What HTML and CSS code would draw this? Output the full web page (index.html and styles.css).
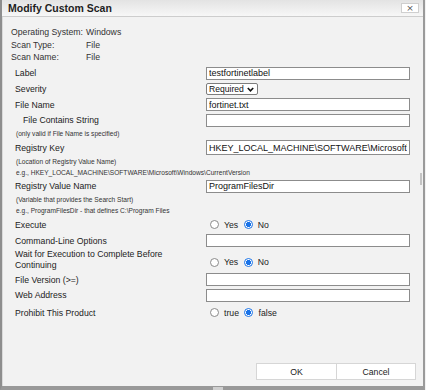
FILE: index.html
```html
<!DOCTYPE html>
<html lang="en">
<head>
<meta charset="utf-8">
<title>Modify Custom Scan</title>
<link rel="stylesheet" href="styles.css">
</head>
<body>
<div class="dialog">
  <div class="titlebar">
    <span class="title">Modify Custom Scan</span>
    <button class="close" type="button" aria-label="Close">×</button>
  </div>
  <div class="content">
    <div class="info">
      <span>Operating System:</span><span>Windows</span>
      <span>Scan Type:</span><span>File</span>
      <span>Scan Name:</span><span>File</span>
    </div>
    <div class="form">
      <div class="row h16"><label class="lbl">Label</label><input class="field" type="text" value="testfortinetlabel"></div>
      <div class="row h16"><label class="lbl">Severity</label>
        <div class="select"><span>Required</span><svg class="chev" width="7" height="5" viewBox="0 0 7 5"><path d="M0.8 1 L3.5 3.8 L6.2 1" fill="none" stroke="#111" stroke-width="1.6"/></svg></div>
      </div>
      <div class="row h15"><label class="lbl">File Name</label><input class="field" type="text" value="fortinet.txt"></div>
      <div class="row h16"><label class="lbl sub">File Contains String</label><input class="field" type="text" value=""></div>
      <div class="note">(only valid if File Name is specified)</div>
      <div class="row h17"><label class="lbl">Registry Key</label><input class="field tall" type="text" value="HKEY_LOCAL_MACHINE\SOFTWARE\Microsoft\Windows\CurrentVersion"></div>
      <div class="note">(Location of Registry Value Name)</div>
      <div class="note">e.g., HKEY_LOCAL_MACHINE\SOFTWARE\Microsoft\Windows\CurrentVersion</div>
      <div class="row h16"><label class="lbl">Registry Value Name</label><input class="field" type="text" value="ProgramFilesDir"></div>
      <div class="note">(Variable that provides the Search Start)</div>
      <div class="note">e.g., ProgramFilesDir - that defines C:\Program Files</div>
      <div class="row h17"><span class="lbl">Execute</span>
        <div class="radios"><label class="opt"><input type="radio" name="exec">Yes</label><label class="opt"><input type="radio" name="exec" checked>No</label></div>
      </div>
      <div class="row h15"><label class="lbl">Command-Line Options</label><input class="field" type="text" value=""></div>
      <div class="row h24"><span class="lbl two">Wait for Execution to Complete Before Continuing</span>
        <div class="radios low"><label class="opt"><input type="radio" name="wait">Yes</label><label class="opt"><input type="radio" name="wait" checked>No</label></div>
      </div>
      <div class="row h15"><label class="lbl">File Version (&gt;=)</label><input class="field" type="text" value=""></div>
      <div class="row h16"><label class="lbl">Web Address</label><input class="field" type="text" value=""></div>
      <div class="row h19"><span class="lbl">Prohibit This Product</span>
        <div class="radios"><label class="opt"><input type="radio" name="prohibit">true</label><label class="opt"><input type="radio" name="prohibit" checked>false</label></div>
      </div>
    </div>
    <div class="scroll-thumb"></div>
  </div>
  <div class="footer">
    <button class="btn" type="button">OK</button>
    <button class="btn" type="button">Cancel</button>
  </div>
  <div class="grip"></div>
</div>
</body>
</html>
```

FILE: styles.css
```css
* { box-sizing: border-box; }
html, body { margin: 0; padding: 0; }
body {
  width: 426px;
  height: 390px;
  background: #f2f2f2;
  font-family: "Liberation Sans", Arial, sans-serif;
  color: #222;
  overflow: hidden;
}
.dialog {
  position: relative;
  width: 425px;
  height: 390px;
  display: flex;
  flex-direction: column;
  background: #f2f2f2;
  border-left: 2px solid #8e8e8e;
  border-right: 2px solid #9a9a9a;
  border-bottom: 4px solid #999;
  box-shadow: inset 1px 0 0 #dadada;
}
.titlebar {
  height: 17px;
  flex: none;
  display: flex;
  align-items: center;
  justify-content: space-between;
  padding: 0 4px 0 6px;
  background: linear-gradient(#e3e3e3, #f7f7f7);
  border-bottom: 1px solid #cdcdcd;
}
.title {
  font-weight: bold;
  font-size: 10.5px;
  color: #1e1e1e;
  line-height: 16px;
}
.close {
  width: 18px;
  height: 10px;
  margin: 0;
  padding: 0;
  border: 1px solid #cfcfcf;
  background: #fff;
  color: #555;
  font-family: "DejaVu Sans", sans-serif;
  font-size: 9px;
  line-height: 8px;
  display: flex;
  align-items: center;
  justify-content: center;
}
.content {
  position: relative;
  flex: 1;
  padding: 9px 0 0 9px;
}
.info {
  display: grid;
  grid-template-columns: 75px auto;
  font-size: 8.7px;
  line-height: 12.5px;
  color: #333;
}
.form {
  margin-top: 1.5px;
  padding-left: 4px;
  font-size: 8.7px;
}
.row {
  display: flex;
  align-items: center;
}
.h15 { height: 15px; }
.h16 { height: 16px; }
.h17 { height: 17px; }
.h19 { height: 19px; }
.h24 { height: 24px; }
.lbl {
  width: 191px;
  flex: none;
  padding-right: 8px;
  color: #222;
}
.lbl.sub { padding-left: 8px; }
.lbl.two { line-height: 11px; }
.field {
  width: 204px;
  height: 13px;
  margin: 0;
  padding: 0 2px;
  border: 1px solid #8c8c8c;
  background: #fff;
  font-family: "Liberation Sans", Arial, sans-serif;
  font-size: 9px;
  color: #111;
  outline: none;
}
.field.tall { height: 15px; }
.select {
  width: 52px;
  height: 12px;
  border: 1px solid #7d7d7d;
  border-radius: 2px;
  background: #fff;
  display: flex;
  align-items: center;
  justify-content: space-between;
  padding: 0 3px 0 2px;
  font-size: 8.6px;
  color: #111;
  white-space: nowrap;
}
.chev { display: block; flex: none; }
.note {
  height: 11px;
  line-height: 11px;
  font-size: 6.6px;
  color: #333;
  padding-left: 1px;
  white-space: nowrap;
}
.radios {
  display: flex;
  align-items: center;
  padding-left: 4px;
  gap: 5.5px;
}
.radios.low { margin-top: 4px; }
.opt {
  display: flex;
  align-items: center;
  gap: 5px;
  font-size: 8.7px;
  color: #222;
}
.opt input {
  appearance: none;
  -webkit-appearance: none;
  width: 9px;
  height: 9px;
  margin: 0;
  border: 1px solid #8a8a8a;
  border-radius: 50%;
  background: #fff;
}
.opt input:checked {
  border-color: #1a73e8;
  background: radial-gradient(circle, #1a73e8 0 2.3px, #fff 2.8px);
}
.scroll-thumb {
  position: absolute;
  right: 1px;
  top: 156px;
  width: 2px;
  height: 12px;
  background: #c4c4c4;
}
.footer {
  flex: none;
  display: flex;
  justify-content: flex-end;
  padding: 0 7px 6px 0;
}
.btn {
  height: 17px;
  margin: 0;
  padding: 0;
  border: 1px solid #d6d6d6;
  background: #fff;
  font-family: "Liberation Sans", Arial, sans-serif;
  font-size: 8.7px;
  color: #222;
}
.btn:first-child { width: 81px; }
.btn:last-child { width: 79px; border-left: none; }
.grip {
  position: absolute;
  left: 211px;
  bottom: -4px;
  width: 10px;
  height: 3px;
  background: #cfcfcf;
}
```
